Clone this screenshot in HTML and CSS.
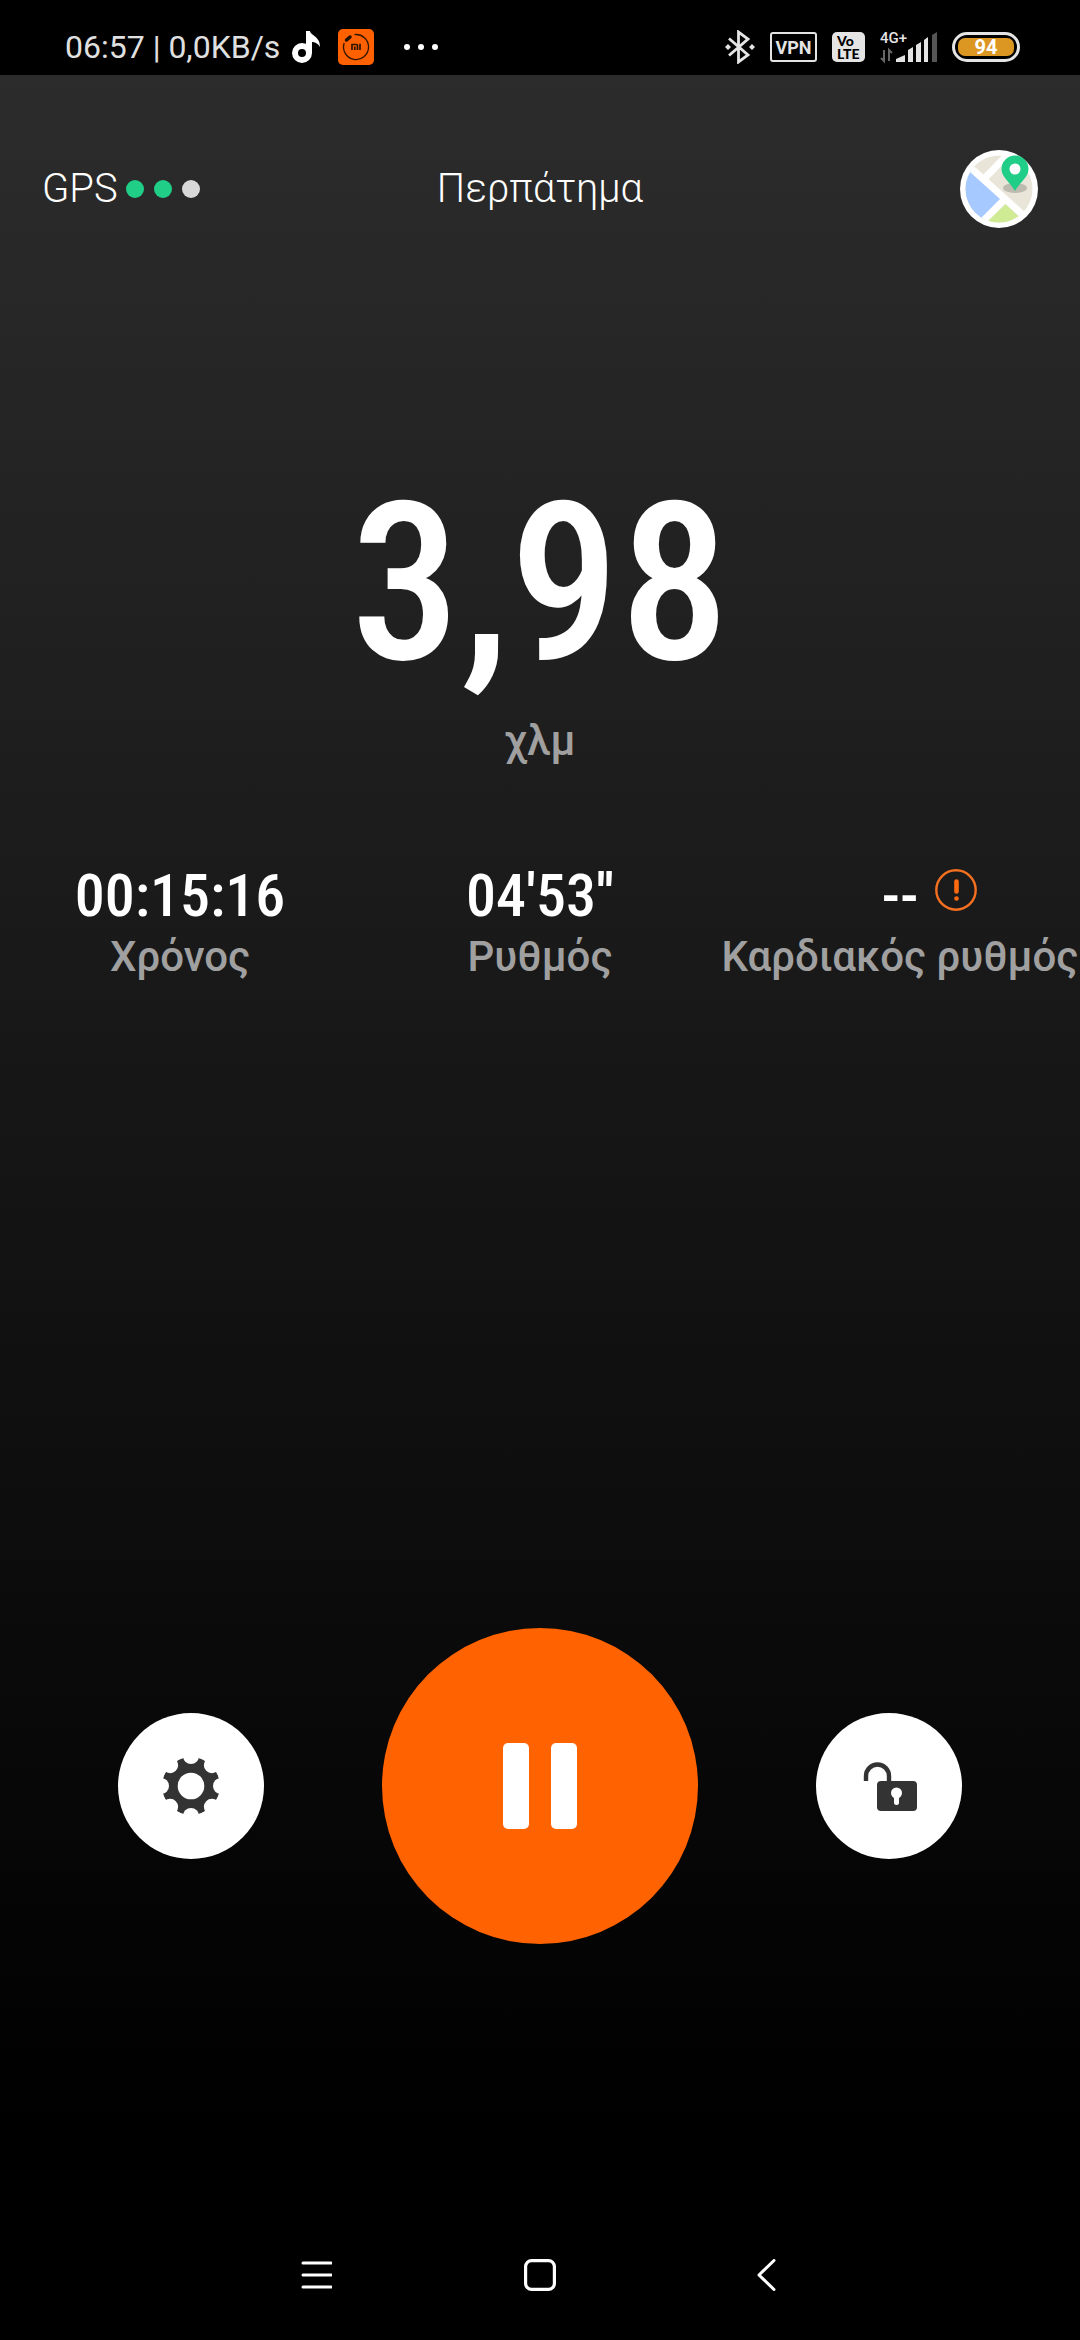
FILE: index.html
```
<!DOCTYPE html>
<html lang="el">
<head>
<meta charset="utf-8">
<meta name="viewport" content="width=device-width, initial-scale=1">
<title>Περπάτημα</title>
<link rel="stylesheet" href="styles.css">
</head>
<body>
<div class="screen">
  <div class="status">
    <div class="status-left">
      <span class="clock">06:57 | 0,0KB/s</span>
      <svg class="note" viewBox="0 0 28 32" width="28" height="32" aria-hidden="true">
        <circle cx="10" cy="22" r="7" fill="none" stroke="#fff" stroke-width="6"/>
        <path d="M14 0l4 0c1 5 10 5 10 16-2-4-6-5-8-5v11h-6z" fill="#fff"/>
      </svg>
      <svg class="mi" viewBox="0 0 36 36" width="36" height="36" aria-hidden="true">
        <rect width="36" height="36" rx="5" fill="#ff6000"/>
        <path d="M16.500 5.600a12.500 12.500 0 1 1-10.300 8.400" fill="none" stroke="#301500" stroke-width="1.300"/>
        <path d="M8.500 11l3.500-3" stroke="#201000" stroke-width="3.500" stroke-linecap="round"/>
        <path d="M14 21v-5.500h4.500q1 0 1 1V21M16.800 17.500V21M22 14.800V21" fill="none" stroke="#301500" stroke-width="1.700"/>
      </svg>
      <svg class="more" viewBox="0 0 34 6" width="34" height="6" fill="#fff" aria-hidden="true">
        <circle cx="3" cy="3" r="3"/><circle cx="17" cy="3" r="3"/><circle cx="31" cy="3" r="3"/>
      </svg>
    </div>
    <div class="status-right">
      <svg viewBox="0 0 30 34" width="30" height="34" aria-hidden="true">
        <path d="M4 8.500L23 25l-9.500 7V2L23 9 4 25.500" fill="none" stroke="#e4e4e4" stroke-width="2.800"/>
        <path d="M3 14l3 3-3 3-3-3zM27 14l3 3-3 3-3-3z" fill="#e4e4e4"/>
      </svg>
      <span class="vpn">VPN</span>
      <span class="volte"><span>Vo</span><span>LTE</span></span>
      <svg class="signal" viewBox="0 0 57 32" width="57" height="32" aria-hidden="true">
        <text class="net" x="0" y="12">4G+</text>
        <path d="M16 31v-3l9-4v7zM28 31V19l5-3v15zM36 31V14l5-3v20zM44 31V9l4-3v25z" fill="#e4e4e4"/>
        <path d="M52 31V4l5-3v30z" fill="#555"/>
        <path d="M4 19v11l-3-3M9 30V19l3 3" fill="none" stroke="#666" stroke-width="2"/>
      </svg>
      <span class="battery"><span class="charge">94</span></span>
    </div>
  </div>

  <main class="workout">
    <header class="top">
      <div class="gps">GPS
        <span class="dots"><i class="dot on"></i><i class="dot on"></i><i class="dot"></i></span>
      </div>
      <h1 class="title">Περπάτημα</h1>
      <button class="map" type="button" aria-label="Χάρτης">
        <svg viewBox="0 0 78 78" width="78" height="78">
          <defs><clipPath id="disc"><circle cx="39" cy="39" r="33.500"/></clipPath></defs>
          <circle cx="39" cy="39" r="39" fill="#fff"/>
          <g clip-path="url(#disc)">
            <path d="M0 0H78V78H0z" fill="#e9e5d8"/>
            <path d="M0 10L43 51 15 80H0z" fill="#a6caff"/>
            <path d="M46 54L70 78H20z" fill="#cfeb94"/>
            <path d="M2 10L74 75M43 51L16 78M24 29L52 0" fill="none" stroke="#fff" stroke-width="7"/>
          </g>
          <ellipse cx="55" cy="38" rx="12" ry="5" fill="#bdbaaf"/>
          <path d="M55 41C49 31 41.500 27 41.500 19a13.500 13.500 0 0 1 27 0C68.500 27 61 31 55 41z" fill="#20ce88"/>
          <circle cx="55" cy="19" r="5.500" fill="#fff"/>
        </svg>
      </button>
    </header>

    <section class="distance">
      <div class="distance-value">3,98</div>
      <div class="label">χλμ</div>
    </section>

    <section class="stats">
      <div class="stat"><div class="value"><span class="figure">00:15:16</span></div><div class="label">Χρόνος</div></div>
      <div class="stat"><div class="value"><span class="figure">04'53''</span></div><div class="label">Ρυθμός</div></div>
      <div class="stat"><div class="value"><span class="figure">--</span>
        <svg class="alert" viewBox="0 0 42 42" width="42" height="42" aria-hidden="true">
          <circle cx="21" cy="21" r="19.700" fill="none" stroke="#f47020" stroke-width="2.400"/>
          <path d="M21.500 12.500v10" stroke="#ff6a10" stroke-width="4.600" stroke-linecap="round"/>
          <circle cx="21.500" cy="29.500" r="2.300" fill="#ff6a10"/>
        </svg></div><div class="label">Καρδιακός ρυθμός</div></div>
    </section>

    <section class="controls">
      <button class="round" type="button" aria-label="Ρυθμίσεις">
        <svg viewBox="0 0 56 56" width="56" height="56">
          <defs>
            <mask id="gear">
              <circle cx="28" cy="28" r="29" fill="#fff"/>
              <g fill="#000">
                <circle cx="28" cy="28" r="13.300"/>
                <circle cx="28" cy="-2" r="8"/><circle cx="28" cy="58" r="8"/><circle cx="-2" cy="28" r="8"/><circle cx="58" cy="28" r="8"/>
                <circle cx="28" cy="-1.500" r="8" transform="rotate(45 28 28)"/><circle cx="28" cy="-1.500" r="8" transform="rotate(135 28 28)"/><circle cx="28" cy="-1.500" r="8" transform="rotate(225 28 28)"/><circle cx="28" cy="-1.500" r="8" transform="rotate(315 28 28)"/>
              </g>
            </mask>
          </defs>
          <circle cx="28" cy="28" r="29" fill="#333" mask="url(#gear)"/>
        </svg>
      </button>
      <button class="round pause" type="button" aria-label="Παύση">
        <svg viewBox="0 0 74 86" width="74" height="86" fill="#fff"><rect width="26" height="86" rx="5"/><rect x="48" width="26" height="86" rx="5"/></svg>
      </button>
      <button class="round" type="button" aria-label="Κλείδωμα">
        <svg viewBox="0 0 56 56" width="56" height="56">
          <path d="M5 23v-5a11.500 11.500 0 0 1 23 0v8" fill="none" stroke="#333" stroke-width="4.400"/>
          <rect x="16" y="23" width="40" height="30" rx="4" fill="#333"/>
          <circle cx="35.500" cy="35" r="5.500" fill="#fff"/>
          <path d="M35.500 36v8.500" stroke="#fff" stroke-width="5" stroke-linecap="round"/>
        </svg>
      </button>
    </section>
  </main>

  <nav class="navbar">
    <button type="button" aria-label="Πρόσφατα"><svg viewBox="0 0 32 32" width="32" height="32"><path d="M3 4h28M3 16h28M3 28h28" stroke="#fff" stroke-width="3" stroke-linecap="round"/></svg></button>
    <button type="button" aria-label="Αρχική"><svg viewBox="0 0 32 32" width="32" height="32"><rect x="1.600" y="1.600" width="28.800" height="28.800" rx="6" fill="none" stroke="#fff" stroke-width="3.200"/></svg></button>
    <button type="button" aria-label="Πίσω"><svg viewBox="0 0 32 32" width="32" height="32"><path d="M26 1.500L11 16l15 14.500" fill="none" stroke="#fff" stroke-width="3" stroke-linecap="round" stroke-linejoin="round"/></svg></button>
  </nav>
</div>
</body>
</html>
```
FILE: styles.css
```
* { box-sizing: border-box; }

body {
  margin: 0;
  background: #000;
  color: #fff;
  font-family: Roboto, "Noto Sans", sans-serif;
}

svg { display: block; flex: none; }

button {
  display: flex;
  align-items: center;
  justify-content: center;
  margin: 0;
  padding: 0;
  border: 0;
  background: none;
}

.screen {
  display: flex;
  flex-direction: column;
  min-height: 100vh;
}

/* Status bar */
.status {
  display: flex;
  justify-content: space-between;
  height: 75px;
  padding: 20px 60px 0 65px;
}

.status-left,
.status-right {
  display: flex;
  align-items: center;
  height: 54px;
}

.clock {
  color: #e0e0e0;
  font-size: 32px;
  line-height: 40px;
  white-space: nowrap;
}

.note { margin-left: 12px; }
.mi { margin-left: 18px; }
.more { margin-left: 30px; }

.status-right { gap: 15px; }

.vpn {
  width: 47px;
  height: 30px;
  border: 2px solid #e4e4e4;
  border-radius: 3px;
  color: #e4e4e4;
  font-size: 18px;
  font-weight: 700;
  line-height: 27px;
  text-align: center;
}

.volte {
  display: flex;
  flex-direction: column;
  width: 33px;
  height: 30px;
  padding: 2px 0 0 5px;
  border-radius: 5px;
  background: #e4e4e4;
  color: #000;
  font-family: Lato, sans-serif;
  font-size: 14px;
  font-weight: 900;
  line-height: 13px;
}

.signal { overflow: visible; }

.net {
  fill: #e4e4e4;
  font-size: 15px;
  font-weight: 500;
}

.battery {
  width: 68px;
  height: 30px;
  padding: 3px;
  border: 3px solid #e4e4e4;
  border-radius: 15px;
}

.charge {
  display: block;
  height: 18px;
  border-radius: 7px;
  background: #dc9622;
  font-size: 20px;
  font-weight: 700;
  line-height: 18px;
  text-align: center;
}

/* Workout */
.workout {
  display: flex;
  flex: 1;
  flex-direction: column;
  background: linear-gradient(#2c2c2c, #000 96%);
}

.top {
  display: grid;
  grid-template-columns: 1fr auto 1fr;
  align-items: center;
  padding: 75px 42px 0;
  font-size: 40px;
  font-weight: 300;
  line-height: 48px;
}

.gps {
  display: flex;
  align-items: center;
  gap: 8px;
}

.dots { display: flex; gap: 10px; }

.dot {
  width: 18px;
  height: 18px;
  border-radius: 50%;
  background: #d8d8d8;
}

.dot.on { background: #20ce88; }

.title {
  margin: 0;
  font-size: inherit;
  font-weight: inherit;
}

.map { justify-self: end; }

.distance {
  padding-top: 223px;
  text-align: center;
}

.distance-value,
.figure {
  font-family: "Roboto Condensed", "Liberation Sans Narrow", sans-serif;
  font-weight: 500;
}

.distance-value {
  font-size: 220px;
  line-height: 266px;
}

.label {
  color: #a0a0a0;
  font-size: 42px;
  font-weight: 500;
  line-height: 48px;
  white-space: nowrap;
}

.stats {
  display: grid;
  grid-template-columns: repeat(3, minmax(0, 1fr));
  padding-top: 94px;
}

.stat {
  display: flex;
  flex-direction: column;
  align-items: center;
}

.value {
  display: grid;
  grid-template-columns: 1fr auto 1fr;
  align-items: center;
  width: 100%;
}

.figure {
  grid-column: 2;
  font-size: 60px;
  line-height: 74px;
}

.alert { margin: 0 0 12px 16px; }

.controls {
  display: flex;
  align-items: center;
  justify-content: space-between;
  margin-top: auto;
  padding: 0 118px 266px;
}

.round {
  width: 146px;
  height: 146px;
  border-radius: 50%;
  background: #fff;
}

.pause {
  width: 316px;
  height: 316px;
  background: #ff6200;
}

/* System navigation */
.navbar {
  display: flex;
  justify-content: center;
  gap: 192px;
  height: 130px;
}
```
